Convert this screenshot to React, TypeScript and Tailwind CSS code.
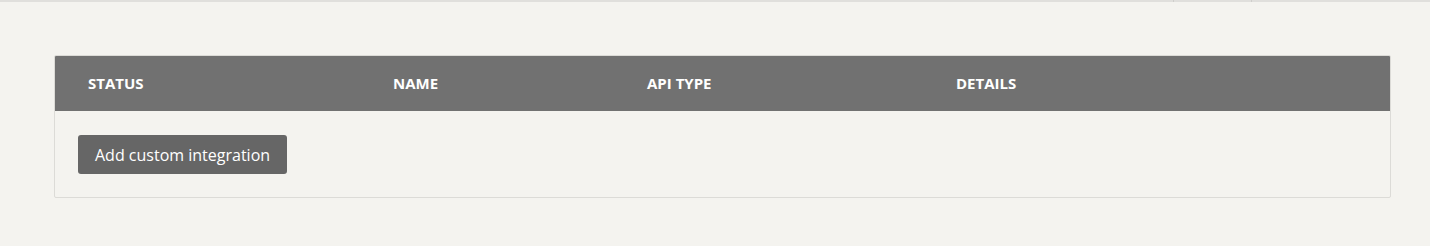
export default function App() {
  const font = { fontFamily: '"Open Sans", "Liberation Sans", sans-serif' };
  return (
    <div className="w-[1430px] h-[246px] bg-[#f4f3ef] overflow-hidden" style={font}>
      <div className="h-[2px] bg-[#e0dfdc] flex">
        <div className="w-[1173px]" />
        <div className="w-px bg-[#cfcecb]" />
        <div className="w-[77px]" />
        <div className="w-px bg-[#cfcecb]" />
      </div>
      <div className="pt-[53px] pl-[54px] pr-[39px]">
        <div className="border border-[#dcdbd7] rounded-[2px] overflow-hidden">
          <div className="bg-[#717171] h-[55px] grid grid-cols-[305px_254px_309px_1fr] items-center pl-[33px] text-white text-[15px] font-bold">
            <div>STATUS</div>
            <div>NAME</div>
            <div>API TYPE</div>
            <div>DETAILS</div>
          </div>
          <div className="pt-[24px] pb-[23px] pl-[23px] flex">
            <button className="h-[39px] px-[17px] bg-[#666666] text-white text-[16px] rounded-[3px] leading-none">
              Add custom integration
            </button>
          </div>
        </div>
      </div>
    </div>
  );
}
